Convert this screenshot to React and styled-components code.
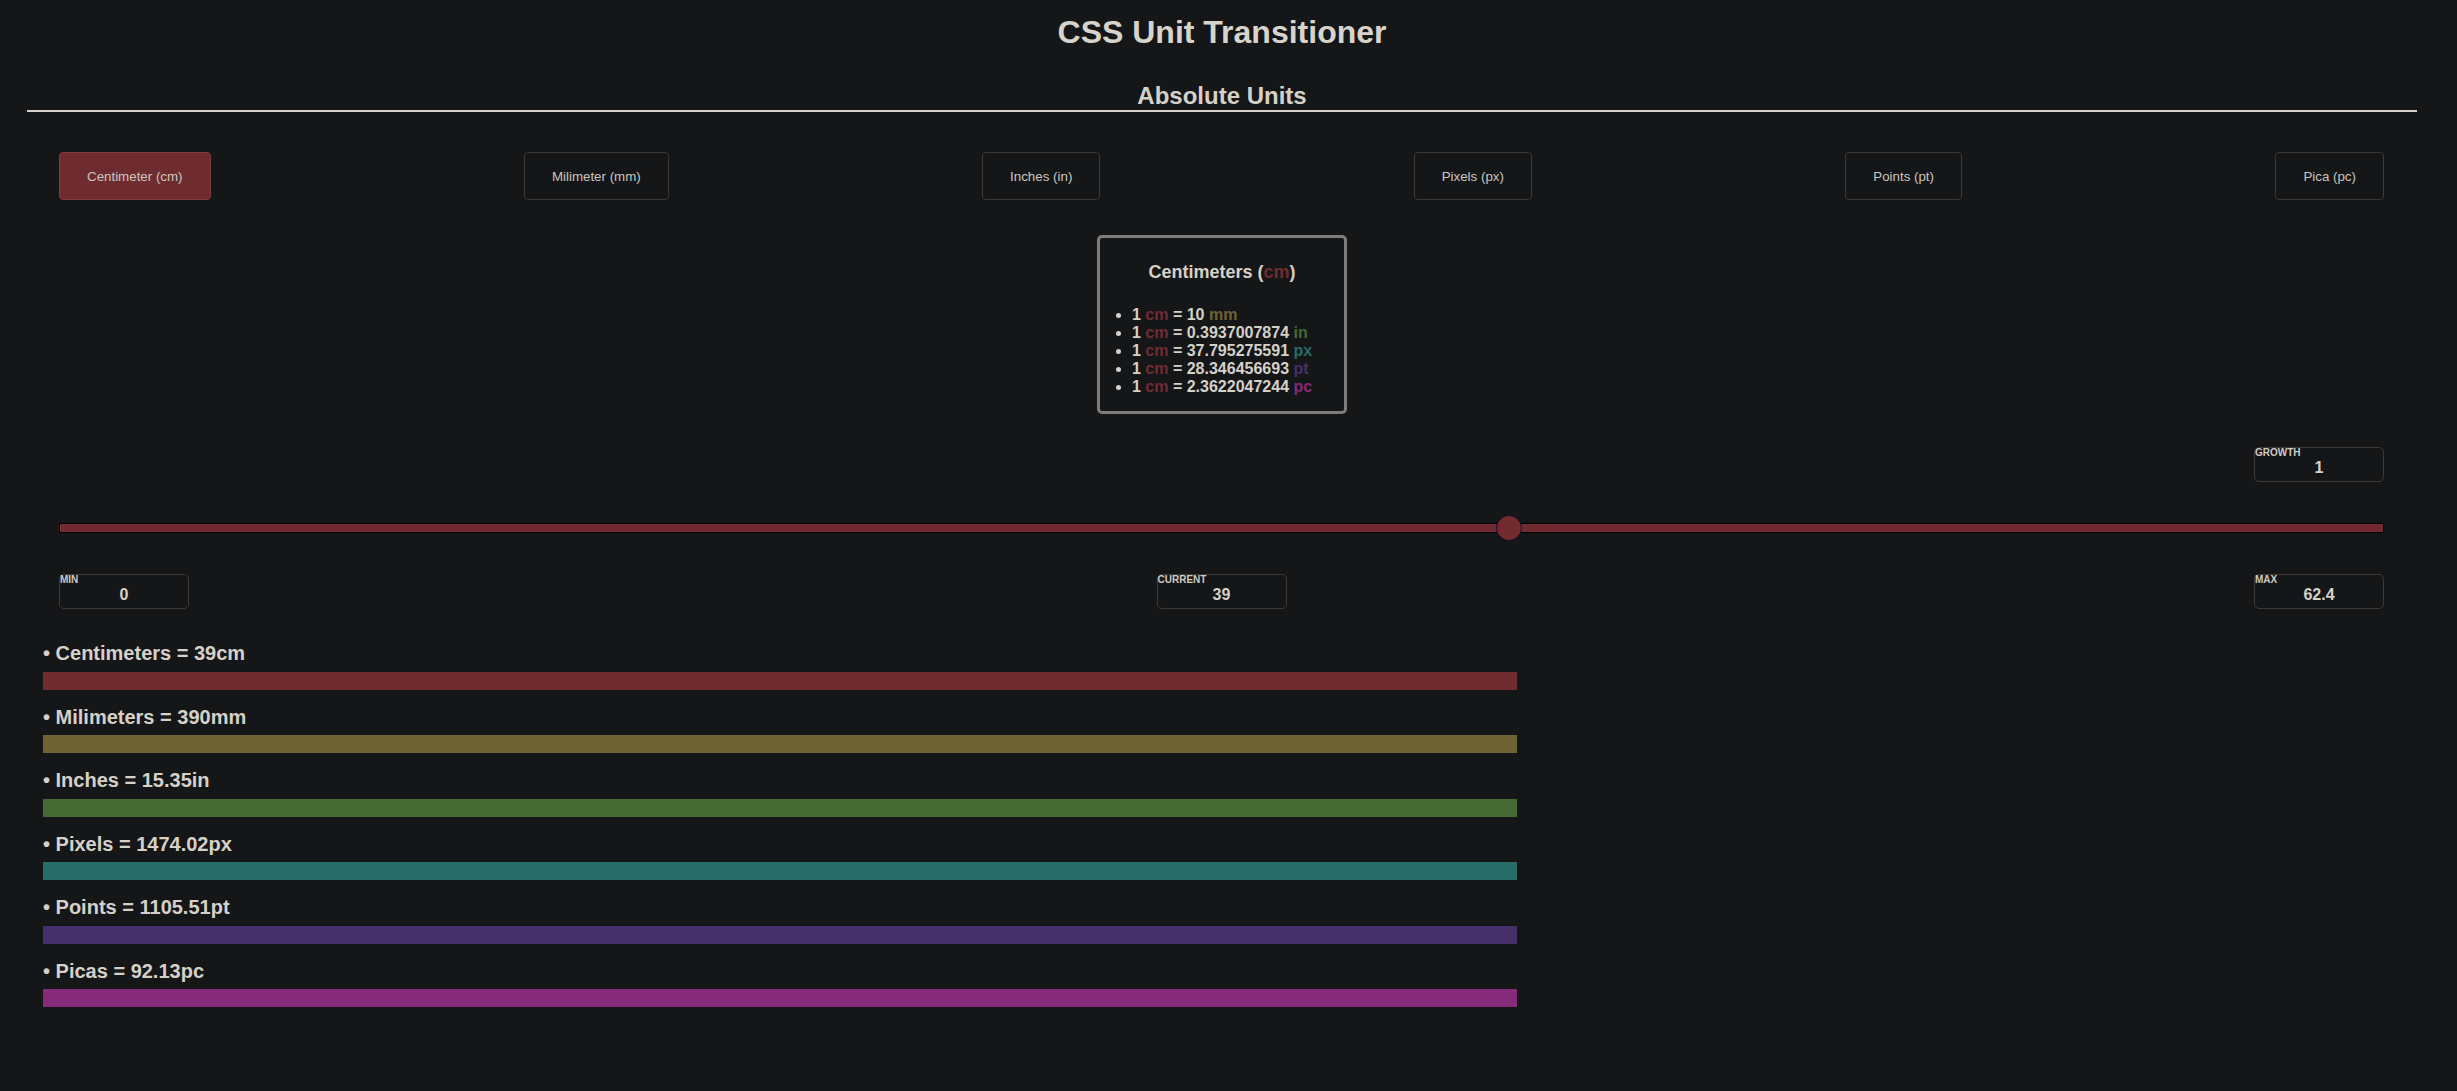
import React from 'react';
import styled, { createGlobalStyle } from 'styled-components';

const units = [
  { key: 'cm', button: 'Centimeter (cm)', name: 'Centimeters', color: '#702c31', factor: 1 },
  { key: 'mm', button: 'Milimeter (mm)', name: 'Milimeters', color: '#6e6334', factor: 10 },
  { key: 'in', button: 'Inches (in)', name: 'Inches', color: '#456a33', factor: 0.3937007874 },
  { key: 'px', button: 'Pixels (px)', name: 'Pixels', color: '#286b69', factor: 37.795275591 },
  { key: 'pt', button: 'Points (pt)', name: 'Points', color: '#45306b', factor: 28.346456693 },
  { key: 'pc', button: 'Pica (pc)', name: 'Picas', color: '#862a7a', factor: 2.3622047244 },
];

const MIN = 0;
const MAX = 62.4;
const CURRENT = 39;

const round = (n) => Math.round(n * 100) / 100;

const App = () => {
  const pct = ((CURRENT - MIN) / (MAX - MIN)) * 100;
  const base = units[0];

  return (
    <>
      <GlobalStyle />
      <Page>
        <Title>CSS Unit Transitioner</Title>
        <Section>
          <SectionTitle>Absolute Units</SectionTitle>

          <ButtonRow>
            {units.map((u, i) => (
              <UnitButton key={u.key} active={i === 0}>{u.button}</UnitButton>
            ))}
          </ButtonRow>

          <InfoCard>
            <InfoTitle>
              {base.name} (<Unit color={base.color}>{base.key}</Unit>)
            </InfoTitle>
            <InfoList>
              {units.slice(1).map((u) => (
                <li key={u.key}>
                  1 <Unit color={base.color}>{base.key}</Unit> = {u.factor} <Unit color={u.color}>{u.key}</Unit>
                </li>
              ))}
            </InfoList>
          </InfoCard>

          <GrowthRow>
            <Field>
              <FieldLabel>GROWTH</FieldLabel>
              1
            </Field>
          </GrowthRow>

          <SliderTrack>
            <Thumb style={{ left: `calc(${pct}% + ${13 - (26 * pct) / 100}px)` }} />
          </SliderTrack>

          <RangeRow>
            <Field>
              <FieldLabel>MIN</FieldLabel>
              {MIN}
            </Field>
            <Field>
              <FieldLabel>CURRENT</FieldLabel>
              {CURRENT}
            </Field>
            <Field>
              <FieldLabel>MAX</FieldLabel>
              {MAX}
            </Field>
          </RangeRow>

          <Results>
            {units.map((u) => {
              const v = round(CURRENT * u.factor);
              return (
                <ResultItem key={u.key}>
                  <ResultLabel>• {u.name} = {v}{u.key}</ResultLabel>
                  <Bar color={u.color} style={{ width: `${v}${u.key}` }} />
                </ResultItem>
              );
            })}
          </Results>
        </Section>
      </Page>
    </>
  );
};

export default App;

const GlobalStyle = createGlobalStyle`
html, body {
    margin: 0;
    padding: 0;
    background: #151618;
}
body {
    font-family: "Liberation Sans", Arial, sans-serif;
    color: #d5d1c9;
}
* {
    box-sizing: border-box;
}
`;

const Page = styled.div`
padding: 14px 40px 40px 27px;
`;

const Title = styled.h1`
margin: 0;
font-size: 32px;
line-height: 37px;
font-weight: bold;
text-align: center;
color: #d8d4cc;
`;

const Section = styled.section`
display: flex;
flex-direction: column;
`;

const SectionTitle = styled.h2`
margin: 31px 0 0;
font-size: 24px;
line-height: 28px;
font-weight: bold;
text-align: center;
border-bottom: 2px solid #d6d2c9;
`;

const ButtonRow = styled.div`
display: flex;
justify-content: space-between;
margin-top: 40px;
padding: 0 33px 0 32px;
`;

const UnitButton = styled.button`
height: 48px;
padding: 0 27px;
font-family: "Liberation Sans", Arial, sans-serif;
font-size: 13.33px;
color: #cbc7bf;
background: ${(p) => (p.active ? '#6e2c30' : '#151618')};
border: 1px solid ${(p) => (p.active ? '#84393d' : '#3a3a3b')};
border-radius: 4px;
cursor: pointer;
`;

const InfoCard = styled.div`
width: 250px;
margin: 35px auto 0;
padding: 24px 0 15px;
border: 3px solid #7d7d7d;
border-radius: 5px;
`;

const InfoTitle = styled.h3`
margin: 0 0 23px;
font-size: 18px;
line-height: 21px;
font-weight: bold;
text-align: center;
`;

const InfoList = styled.ul`
margin: 0;
padding-left: 32px;
font-size: 16px;
line-height: 18px;
font-weight: bold;
`;

const Unit = styled.span`
color: ${(p) => p.color};
`;

const GrowthRow = styled.div`
display: flex;
justify-content: flex-end;
margin-top: 33px;
padding-right: 33px;
`;

const Field = styled.div`
position: relative;
width: 130px;
height: 35px;
display: flex;
align-items: center;
justify-content: center;
padding-top: 6px;
border: 1px solid #3a3a3b;
border-radius: 5px;
font-size: 16px;
font-weight: bold;
color: #d5d1c9;
`;

const FieldLabel = styled.span`
position: absolute;
top: 0;
left: 0;
font-size: 10px;
line-height: 1;
font-weight: bold;
color: #cfcbc3;
`;

const SliderTrack = styled.div`
position: relative;
height: 10px;
margin: 41px 33px 0 32px;
background: #722c30;
border: 1px solid #000;
`;

const Thumb = styled.div`
position: absolute;
top: 50%;
width: 26px;
height: 26px;
border-radius: 50%;
background: #722c30;
border: 1.5px solid #0e0e2a;
transform: translate(-50%, -50%);
`;

const RangeRow = styled.div`
display: flex;
justify-content: space-between;
margin-top: 41px;
padding: 0 33px 0 32px;
`;

const Results = styled.div`
display: flex;
flex-direction: column;
margin-top: 33px;
padding-left: 16px;
`;

const ResultItem = styled.div`
display: flex;
flex-direction: column;
margin-bottom: 16px;
`;

const ResultLabel = styled.div`
font-size: 20px;
line-height: 23px;
font-weight: bold;
margin-bottom: 6.5px;
`;

const Bar = styled.div`
height: 18px;
background: ${(p) => p.color};
`;
